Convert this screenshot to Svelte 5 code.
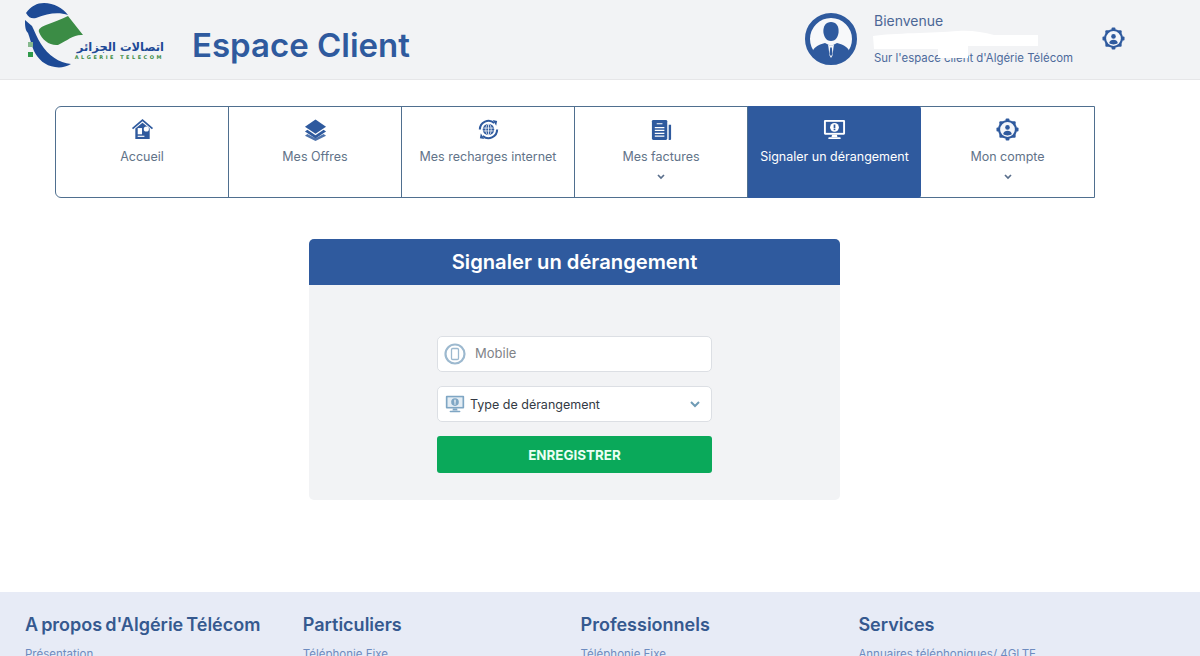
<script>
	const columns = [
		{ title: "A propos d'Algérie Télécom", link: "Présentation" },
		{ title: "Particuliers", link: "Téléphonie Fixe" },
		{ title: "Professionnels", link: "Téléphonie Fixe" },
		{ title: "Services", link: "Annuaires téléphoniques/ 4GLTE" }
	];
</script>

{#snippet gear(size)}
	<svg width={size} height={size} viewBox="0 0 24 24">
		<g fill="#2f5a9e">
			<rect x="10" y="0.500" width="4" height="4" rx="1" />
			<rect x="10" y="19.500" width="4" height="4" rx="1" />
			<rect x="0.500" y="10" width="4" height="4" rx="1" />
			<rect x="19.500" y="10" width="4" height="4" rx="1" />
			<rect x="3.500" y="3.500" width="4" height="4" rx="1" />
			<rect x="16.500" y="3.500" width="4" height="4" rx="1" />
			<rect x="3.500" y="16.500" width="4" height="4" rx="1" />
			<rect x="16.500" y="16.500" width="4" height="4" rx="1" />
		</g>
		<circle cx="12" cy="12" r="8.800" fill="#f4f6fa" stroke="#2f5a9e" stroke-width="2.200" />
		<circle cx="12" cy="9.800" r="2.400" fill="#2f5a9e" />
		<path d="M7.500 16.800c.6-2.500 2.200-3.400 4.500-3.400s3.900.9 4.500 3.400c-1.200 1-2.800 1.500-4.500 1.500s-3.300-.5-4.500-1.500z" fill="#2f5a9e" />
	</svg>
{/snippet}

{#snippet screen(fill, inner, size)}
	<svg width={size} height={size} viewBox="0 0 24 24">
		<rect x="1" y="2" width="22" height="15.500" rx="1.200" fill={fill} />
		<rect x="3" y="4" width="18" height="11.500" fill={inner} />
		<circle cx="12" cy="9.700" r="4.600" fill={fill} />
		<rect x="11.100" y="6.800" width="1.800" height="3.800" fill={inner} />
		<rect x="11.100" y="11.200" width="1.800" height="1.500" fill={inner} />
		<path d="M9.500 17.500h5l.6 2.400H8.900z" fill={fill} />
		<rect x="5.500" y="20" width="13" height="2" rx="1" fill={fill} />
	</svg>
{/snippet}

{#snippet chevron()}
	<svg class="chev" width="8" height="6" viewBox="0 0 8 6">
		<path d="M1 1l3 3 3-3" fill="none" stroke="#5a6f8c" stroke-width="1.700" />
	</svg>
{/snippet}

<div class="page">
	<header>
		<div class="brand">
			<div class="logo">
				<svg width="62" height="79" viewBox="25 0 62 79">
					<path d="M26 13C31 6 37 3 44 3c10 0 19 5 24 12-9-3-20-2-32 3-4 1-7 0-10-5z" fill="#1d4a96" />
					<path d="M39 32c-1-3 2-5 7-7 8-3 16-6 22-9 5 6 10 13 15 19-9-1-15 5-25 10-8 1-16-5-19-13z" fill="#3b8c45" />
					<path d="M25 20l7 6c3 6 5 12 9 18 7 11 18 19 30 20-5 3-11 4-16 3-10-1-17-8-21-16-3-7-4-13-6-18-3-3-3-8-3-13z" fill="#1d4a96" />
					<rect x="28" y="42" width="5" height="5" fill="#86b98e" />
					<rect x="28" y="52" width="5" height="5" fill="#2f9a4a" />
				</svg>
				<div class="logo-text">
					<span class="ar" dir="rtl">اتصالات الجزائر</span>
					<span class="lat">ALGERIE TELECOM</span>
				</div>
			</div>
			<h1>Espace Client</h1>
		</div>
		<div class="user">
			<svg class="avatar" width="52" height="52" viewBox="0 0 52 52">
				<circle cx="26" cy="26" r="23.500" fill="#f7f8fa" stroke="#2f5a9e" stroke-width="5" />
				<path d="M26 9c5 0 8 4 7.600 10-.3 4-2.400 9-7.600 9s-7.300-5-7.600-9C18 13 21 9 26 9z" fill="#2f5a9e" />
				<path d="M7 41c1-7 6-9 13-11l6 3 6-3c7 2 12 4 13 11-4 5-11 9-19 9S11 46 7 41z" fill="#2f5a9e" />
				<path d="M23 31.500l3 1.500 3-1.500-.5 3-1 8-1.500 2.500-1.500-2.500-1-8z" fill="#f7f8fa" />
				<path d="M25.200 34.500h1.600l.7 6.500-1.500 2.200-1.500-2.200z" fill="#2f5a9e" />
			</svg>
			<div class="hello">
				<span class="b">Bienvenue</span>
				<span class="name"></span>
				<span class="s">Sur l'espace client d'Algérie Télécom</span>
			</div>
			<div class="settings">{@render gear(23)}</div>
		</div>
		<svg class="redact" width="166" height="30" viewBox="0 0 166 30">
			<path d="M0 6c20-3 60-3 85-5 12-1 25 1 36 4h44v11h-70v12H65v-9H1z" fill="#fff" />
		</svg>
	</header>

	<nav>
		<a class="item">
			<svg width="23" height="23" viewBox="0 0 24 24">
				<path d="M12 1L1 10.500l1.200 1.300L12 3.400l9.800 8.400 1.200-1.300z" fill="#2f5a9e" />
				<path d="M4.500 11L12 5l7.500 6v11H4.500z" fill="#2f5a9e" />
				<rect x="7" y="10.500" width="4.500" height="6.500" fill="#fff" />
				<circle cx="16" cy="11.500" r="2.700" fill="#fff" />
				<rect x="7" y="18.500" width="7" height="1.200" fill="#fff" />
			</svg>
			<span>Accueil</span>
		</a>
		<a class="item">
			<svg width="23" height="23" viewBox="0 0 24 24">
				<path d="M12 1.500L23 9l-11 7.500L1 9z" fill="#2f5a9e" />
				<path d="M3.500 12.200L1 14l11 7.500L23 14l-2.500-1.800-8.500 5.800z" fill="#2f5a9e" />
				<path d="M3.500 16.700L1 18.500 12 24l11-5.500-2.500-1.800-8.500 4.300z" fill="#2f5a9e" opacity="0.850" />
			</svg>
			<span>Mes Offres</span>
		</a>
		<a class="item">
			<svg width="23" height="23" viewBox="0 0 24 24">
				<path d="M3 12a9 9 0 0 1 15-6.700" fill="none" stroke="#2f5a9e" stroke-width="2.200" />
				<path d="M21 12a9 9 0 0 1-15 6.700" fill="none" stroke="#2f5a9e" stroke-width="2.200" />
				<path d="M16.500 2l4.500 1-1 5z" fill="#2f5a9e" />
				<path d="M7.500 22L3 21l1-5z" fill="#2f5a9e" />
				<circle cx="12" cy="12" r="6" fill="#2f5a9e" />
				<path d="M6.500 10.500h11M6.500 13.500h11M12 6v12" stroke="#fff" stroke-width="0.800" />
				<ellipse cx="12" cy="12" rx="2.800" ry="6" fill="none" stroke="#fff" stroke-width="0.800" />
			</svg>
			<span>Mes recharges internet</span>
		</a>
		<a class="item">
			<svg width="23" height="23" viewBox="0 0 24 24">
				<rect x="2" y="2" width="16" height="21" rx="1.500" fill="#2f5a9e" />
				<path d="M19.500 7H22v15a1 1 0 0 1-1 1h-1.500z" fill="#2f5a9e" />
				<path d="M7 6h6M5 10h10M5 13h10M5 16h10M5 19h10" stroke="#fff" stroke-width="1.300" />
			</svg>
			<span>Mes factures</span>
			{@render chevron()}
		</a>
		<a class="item active">
			{@render screen("#fff", "#2f5a9e", 23)}
			<span>Signaler un dérangement</span>
		</a>
		<a class="item">
			{@render gear(23)}
			<span>Mon compte</span>
			{@render chevron()}
		</a>
	</nav>

	<main>
		<section class="panel">
			<h2>Signaler un dérangement</h2>
			<form>
				<div class="field">
					<svg width="22" height="22" viewBox="0 0 22 22">
						<circle cx="11" cy="11" r="9.500" fill="none" stroke="#9db9cf" stroke-width="2.200" />
						<rect x="7.500" y="5.500" width="7" height="11" rx="1.200" fill="none" stroke="#9db9cf" stroke-width="1.300" />
					</svg>
					<span class="placeholder">Mobile</span>
				</div>
				<div class="field select">
					{@render screen("#7fa6c4", "#e4edf4", 20)}
					<span class="value">Type de dérangement</span>
					<svg class="sel-chev" width="10" height="7" viewBox="0 0 10 7">
						<path d="M1 1l4 4 4-4" fill="none" stroke="#6f9bb5" stroke-width="2" />
					</svg>
				</div>
				<button type="button">ENREGISTRER</button>
			</form>
		</section>
	</main>

	<footer>
		{#each columns as col}
			<div class="col">
				<h3>{col.title}</h3>
				<p>{col.link}</p>
			</div>
		{/each}
	</footer>
</div>

<style>
	:global(body) {
		margin: 0;
		background: #fff;
	}

	.page {
		height: 656px;
		overflow: hidden;
		font-family: Inter, "Open Sans", sans-serif;
		color: #2f5a9e;
	}

	header {
		position: relative;
		height: 79px;
		border-bottom: 1px solid #e6e6e8;
		background: #f2f3f5;
		display: flex;
		justify-content: space-between;
		align-items: center;
		padding: 0 75px 0 25px;
	}

	.brand {
		display: flex;
		align-items: center;
		gap: 27px;
	}

	.logo {
		width: 140px;
		height: 79px;
		position: relative;
	}

	.logo svg {
		display: block;
	}

	.logo-text {
		position: absolute;
		right: 1px;
		top: 41px;
		display: flex;
		flex-direction: column;
		align-items: flex-end;
	}

	.ar {
		font-family: "DejaVu Sans", sans-serif;
		font-size: 11.500px;
		line-height: 13px;
		font-weight: 700;
		color: #1f4a97;
	}

	.lat {
		font-family: "DejaVu Sans", sans-serif;
		font-size: 5px;
		line-height: 6px;
		letter-spacing: 2.500px;
		font-weight: 700;
		color: #3b8c45;
	}

	h1 {
		margin: 10px 0 0;
		font-size: 33px;
		font-weight: 600;
		color: #2f5a9e;
	}

	.user {
		display: flex;
		align-items: center;
		margin-bottom: 2px;
	}

	.avatar {
		margin-right: 17px;
	}

	.hello {
		width: 228px;
		display: flex;
		flex-direction: column;
	}

	.b {
		font-size: 14px;
		line-height: 17px;
		color: #4c6796;
	}

	.name {
		height: 22px;
	}

	.s {
		font-size: 11.400px;
		line-height: 15px;
		color: #4d6a9c;
	}

	.settings {
		display: flex;
		margin-bottom: 1px;
	}

	.redact {
		position: absolute;
		left: 873px;
		top: 30px;
	}

	nav {
		margin: 26px 0 0 55px;
		width: 1040px;
		height: 92px;
		box-sizing: border-box;
		display: flex;
		border: 1px solid #4f6f8f;
		border-radius: 6px 0 0 6px;
	}

	.item {
		width: 173px;
		box-sizing: border-box;
		display: flex;
		flex-direction: column;
		align-items: center;
		padding-top: 11px;
		border-right: 1px solid #4f6f8f;
		font-size: 12.500px;
		color: #627389;
	}

	.item:last-child {
		border-right: 0;
		flex: 1;
	}

	.item span {
		margin-top: 8px;
		line-height: 16px;
		white-space: nowrap;
	}

	.chev {
		margin-top: 9px;
	}

	.active {
		margin: -1px 0;
		padding-top: 12px;
		background: #2f5a9e;
		color: #fff;
		border-right: 0;
		border-radius: 0 3px 3px 0;
		width: 173px;
	}

	main {
		margin-top: 41px;
		padding-left: 309px;
		height: 353px;
	}

	.panel {
		width: 531px;
		height: 261px;
		background: #f2f3f5;
		border-radius: 5px;
		overflow: hidden;
	}

	h2 {
		margin: 0;
		height: 46px;
		line-height: 46px;
		background: #2f5a9e;
		color: #fff;
		text-align: center;
		font-size: 20.200px;
		font-weight: 600;
	}

	form {
		width: 275px;
		margin: 51px auto 0;
		display: flex;
		flex-direction: column;
		gap: 14px;
	}

	.field {
		height: 36px;
		box-sizing: border-box;
		background: #fff;
		border: 1px solid #dcdfe4;
		border-radius: 5px;
		display: flex;
		align-items: center;
		padding-left: 6px;
		font-size: 13px;
	}

	.placeholder {
		margin-left: 9px;
		margin-bottom: 2px;
		color: #7f8388;
	}

	.select {
		padding-left: 7px;
	}

	.value {
		margin-left: 5px;
		font-size: 12.500px;
		color: #333a44;
	}

	.sel-chev {
		margin-left: auto;
		margin-right: 11px;
	}

	button {
		height: 37px;
		border: 0;
		border-radius: 3px;
		background: #0aa95a;
		color: #eafff3;
		font-family: inherit;
		font-size: 13.400px;
		font-weight: 700;
	}

	footer {
		background: #e7ebf6;
		height: 200px;
		padding: 23px 0 0 25px;
		display: flex;
	}

	.col {
		width: 277.800px;
	}

	h3 {
		margin: 0 0 12px;
		font-size: 18px;
		line-height: 20px;
		font-weight: 600;
		word-spacing: -1.500px;
		color: #35598f;
		white-space: nowrap;
	}

	.col p {
		margin: 0;
		font-size: 11.500px;
		line-height: 14px;
		color: #6d8cc0;
	}
</style>
